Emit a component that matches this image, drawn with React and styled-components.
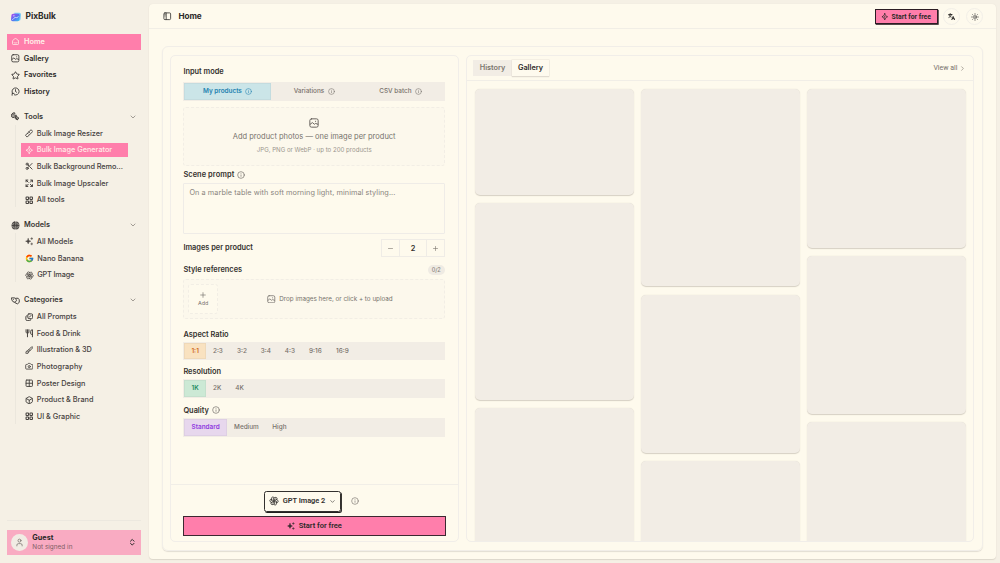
import styled, { createGlobalStyle } from 'styled-components';
import {
  Star, Scissors, Grid2x2, Camera, Box, ChevronDown, ChevronRight, ChevronsUpDown,
  Info, Minus, Plus, Sun, User, Utensils, Brush,
} from 'lucide-react';
import { FcGoogle } from 'react-icons/fc';
import { TbSmartHome, TbBrandOpenai } from 'react-icons/tb';

const GlobalStyle = createGlobalStyle`
  * {
    box-sizing: border-box;
  }
  body {
    margin: 0;
    background: #f5f0e5;
    color: #2b2928;
    font-family: Inter, 'Open Sans', sans-serif;
    font-size: 7.4px;
    overflow: hidden;
  }
  svg {
    flex: none;
    display: block;
  }
`;

const Page = styled.div`
  display: flex;
  height: 563px;
  width: 1000px;
  overflow: hidden;
`;

const T = styled.span`
  white-space: nowrap;
  line-height: 1.3;
  letter-spacing: ${(p) => p.$ls || 0}px;
`;

/* ---------- sidebar ---------- */

const Sidebar = styled.aside`
  width: 149px;
  padding: 8px 8px 8.5px 7px;
  display: flex;
  flex-direction: column;
`;

const Brand = styled.div`
  height: 17px;
  display: flex;
  align-items: center;
  gap: 4.8px;
  padding-left: 3.7px;
  margin-bottom: 8.5px;
  font-size: 8.4px;
  font-weight: 700;
`;

const NavItem = styled.div`
  height: 16.68px;
  display: flex;
  align-items: center;
  gap: 3.7px;
  padding-left: 4.4px;
  font-size: 7.3px;
  font-weight: 600;
  width: 134px;
  background: ${(p) => (p.$active ? '#ff7eab' : 'transparent')};
  color: ${(p) => (p.$active ? '#fff3ea' : 'inherit')};
`;

const Section = styled.section`
  margin-top: 7px;
  &:first-of-type {
    margin-top: 8.2px;
  }
`;

const SectionHead = styled(NavItem)`
  color: #393633;
  > :last-child {
    margin-left: auto;
    margin-right: 4.5px;
    color: #77716b;
  }
`;

const SubList = styled.div`
  margin-left: 8px;
  padding-left: 4.7px;
  padding-top: 1.4px;
  border-left: 1px solid #ebe7dd;
`;

const SubItem = styled.div`
  height: 13.9px;
  margin-bottom: 2.78px;
  width: 107.5px;
  display: flex;
  align-items: center;
  gap: 3.6px;
  padding-left: 4px;
  font-size: 7.3px;
  font-weight: 500;
  background: ${(p) => (p.$active ? '#ff7eab' : 'transparent')};
  color: ${(p) => (p.$active ? '#ffe9e6' : '#45413e')};
`;

const UserArea = styled.div`
  margin-top: auto;
  border-top: 1px solid #ece8df;
  padding-top: 8.5px;
`;

const UserCard = styled.div`
  width: 134px;
  height: 25px;
  background: #f9abc2;
  display: flex;
  align-items: center;
  gap: 4px;
  padding: 0 5px 0 4.3px;
  > :last-child {
    margin-left: auto;
  }
`;

const Avatar = styled.div`
  width: 17px;
  height: 17px;
  border-radius: 50%;
  background: #f1ece4;
  color: #77716c;
  display: grid;
  place-items: center;
`;

const UserName = styled.div`
  display: flex;
  flex-direction: column;
  padding-top: 1px;
  font-size: 7.3px;
  font-weight: 700;
  small {
    font-size: 6.4px;
    font-weight: 400;
    color: #805e66;
    letter-spacing: 0.02px;
    line-height: 10px;
  }
`;

/* ---------- main frame ---------- */

const Main = styled.main`
  width: 847px;
  height: 555px;
  margin-top: 4px;
  background: #fefaed;
  border-radius: 4px;
  box-shadow: 0 0 1px #e2ddd2, 0 1px 1px #dcd6c9;
`;

const TopBar = styled.header`
  height: 25px;
  border-bottom: 1px solid #f1eee6;
  display: flex;
  align-items: center;
  padding: 1px 13px 0 14px;
  font-size: 8.2px;
  font-weight: 700;
`;

const PageTitle = styled(T)`
  margin-left: 7px;
`;

const Cta = styled.div`
  margin-left: auto;
  margin-right: 5.5px;
  width: 63px;
  height: 14.5px;
  background: #ff7eab;
  border: 1px solid #2c1c24;
  box-shadow: 0.7px 0.8px 0 #2c1c24;
  display: flex;
  align-items: center;
  justify-content: center;
  gap: 3px;
  padding-top: 1px;
  font-size: 6.8px;
  font-family: Roboto, sans-serif;
`;

const RoundButton = styled.div`
  width: 17px;
  height: 17px;
  margin-left: ${(p) => p.$gap || 0}px;
  border-radius: 50%;
  border: 1px solid #f2efe8;
  display: grid;
  place-items: center;
`;

const Panel = styled.div`
  margin: 17px 13px 0;
  height: 504.5px;
  border: 1px solid #f1eee8;
  border-radius: 6px;
  box-shadow: 0 1px 1px #e2ddd2;
  padding: 8px 8px 0 7px;
  display: flex;
  gap: 7px;
`;

const Card = styled.section`
  width: ${(p) => p.$w}px;
  height: 487px;
  border: 1px solid #f1eee9;
  border-radius: 5px;
  display: flex;
  flex-direction: column;
  overflow: hidden;
`;

/* ---------- form ---------- */

const Form = styled.div`
  padding: 10px 13px 0 12.4px;
  height: 428px;
`;

const Label = styled.div`
  display: flex;
  align-items: center;
  justify-content: ${(p) => (p.$spread ? 'space-between' : 'flex-start')};
  gap: 3px;
  height: 12px;
  margin-top: ${(p) => p.$mt || 0}px;
  font-size: 7.4px;
  font-weight: 600;
  color: #35322f;
  > svg {
    color: #69645f;
  }
`;

const Segments = styled.div`
  height: 18.5px;
  margin-top: ${(p) => p.$mt}px;
  background: #f2ede5;
  padding: 1px;
  display: flex;
`;

const tones = {
  blue: ['#cbe5e8', '#2583b0'],
  orange: ['#f9e2c0', '#cf6a1e'],
  green: ['#cce9d5', '#238a60'],
  purple: ['#e7d7ed', '#8f3be0'],
};

const Segment = styled.div`
  ${(p) => (p.$w ? `width: ${p.$w}px;` : 'flex: 1;')}
  display: flex;
  align-items: center;
  justify-content: center;
  gap: 3.5px;
  font-size: 6.4px;
  font-weight: ${(p) => (p.$tone ? 600 : 500)};
  color: ${(p) => (p.$tone ? tones[p.$tone][1] : '#77716b')};
  background: ${(p) => (p.$tone ? tones[p.$tone][0] : 'transparent')};
  box-shadow: ${(p) => (p.$tone ? 'inset 0 0 0 0.7px rgba(90, 90, 90, 0.08)' : 'none')};
`;

const Dashed = styled.div`
  border: 1px dashed #f2eee5;
  border-radius: 3px;
  background: #fcf8ec;
  color: #77736d;
`;

const DropZone = styled(Dashed)`
  margin-top: 6.5px;
  height: 58.5px;
  display: flex;
  flex-direction: column;
  align-items: center;
  padding-top: 10px;
  font-size: 7.5px;
  svg {
    color: #5e5954;
    margin-bottom: 3.5px;
  }
  small {
    font-size: 6.1px;
    line-height: 10px;
    margin-top: 3.4px;
    color: #9a958d;
  }
`;

const TextArea = styled.div`
  margin-top: 1.6px;
  height: 51px;
  border: 1px solid #efece7;
  border-radius: 1px;
  padding: 4px 5px;
  font-size: 7.3px;
  color: #8a857e;
`;

const Stepper = styled.div`
  width: 64px;
  height: 18px;
  border: 1px solid #efece6;
  display: grid;
  grid-template-columns: 17px 1fr 17px;
  > * {
    display: grid;
    place-items: center;
  }
  > :nth-child(2) {
    border: solid #efece6;
    border-width: 0 1px;
  }
  svg {
    color: #77716b;
  }
`;

const Count = styled.div`
  width: 17.5px;
  height: 9.7px;
  border-radius: 5px;
  background: #efebe3;
  color: #8a857e;
  font-size: 5.6px;
  font-weight: 500;
  display: grid;
  place-items: center;
`;

const RefZone = styled(Dashed)`
  margin-top: 3px;
  height: 40px;
  padding: 4px;
  display: flex;
`;

const AddBox = styled(Dashed)`
  width: 29.5px;
  height: 30px;
  display: flex;
  flex-direction: column;
  align-items: center;
  padding-top: 6px;
  gap: 1px;
  font-size: 5.4px;
  background: #fefaed;
`;

const RefHint = styled.div`
  flex: 1;
  display: flex;
  align-items: center;
  justify-content: center;
  gap: 3.5px;
  padding-left: 2px;
  font-size: 6.3px;
`;

const Footer = styled.div`
  flex: 1;
  border-top: 1px solid #f1eee7;
  padding: 6px 12.5px 0 12px;
`;

const ModelRow = styled.div`
  display: flex;
  align-items: center;
  padding-left: 81px;
  gap: 9.5px;
  color: #77716b;
`;

const ModelButton = styled.div`
  width: 77px;
  height: 20.5px;
  border: 1px solid #33302e;
  border-radius: 2.5px;
  box-shadow: 0.9px 1px 0 #22201f;
  display: flex;
  align-items: center;
  justify-content: center;
  gap: 3.5px;
  font-size: 7.4px;
  font-weight: 600;
  font-family: Roboto, sans-serif;
  color: #33302e;
`;

const Submit = styled.div`
  height: 19.5px;
  margin-top: 4.5px;
  background: #ff7eab;
  border: 1.4px solid #3d2831;
  display: flex;
  align-items: center;
  justify-content: center;
  gap: 4px;
  font-size: 7.5px;
  font-weight: 600;
  font-family: Roboto, sans-serif;
`;

/* ---------- gallery ---------- */

const GalleryBar = styled.div`
  height: 25px;
  flex: none;
  border-bottom: 1px solid #f1eee7;
  display: flex;
  align-items: center;
  padding: 0 7px 0 6px;
`;

const Tabs = styled.div`
  height: 16px;
  display: flex;
  background: #f2ede5;
`;

const Tab = styled.div`
  width: ${(p) => p.$w}px;
  display: grid;
  place-items: center;
  font-size: 7.3px;
  font-weight: 600;
  color: ${(p) => (p.$active ? '#2f2c2a' : '#7b766f')};
  background: ${(p) => (p.$active ? '#fefaee' : 'transparent')};
  box-shadow: ${(p) => (p.$active ? '0 0 0 0.5px #e9e4da, 0 1px 1px #d9d3c8' : 'none')};
`;

const ViewAll = styled.div`
  margin-left: auto;
  display: flex;
  align-items: center;
  gap: 1.5px;
  padding-top: 1px;
  font-size: 7px;
  font-family: Roboto, sans-serif;
  color: #77716b;
`;

const Columns = styled.div`
  display: grid;
  grid-template-columns: repeat(3, 158.8px);
  column-gap: 7.2px;
  padding: 8.3px 8px 0;
`;

const Column = styled.div`
  display: flex;
  flex-direction: column;
  gap: 8.2px;
`;

const Tile = styled.div`
  height: ${(p) => p.$h}px;
  flex: none;
  background: #f2ede5;
  border-radius: 5px;
  box-shadow: 0 0.8px 1px #d6d0c4;
`;

/* ---------- icons ---------- */

const Icon = ({ s = 9, w = 2, children }) => (
  <svg width={s} height={s} viewBox="0 0 24 24" fill="none" stroke="currentColor" strokeWidth={w} strokeLinecap="round" strokeLinejoin="round">
    {children}
  </svg>
);

const Logo = () => (
  <svg width="10" height="10" viewBox="0 0 24 24">
    <defs>
      <linearGradient id="logo" x1="0" y1="0" x2="1" y2="1">
        <stop offset="0" stopColor="#b64cf0" />
        <stop offset="0.5" stopColor="#5b6cf3" />
        <stop offset="1" stopColor="#35c8ef" />
      </linearGradient>
    </defs>
    <path d="M8 2h12a4 4 0 0 1 4 4l-1 11a4 4 0 0 1-4 4H8z" fill="#79c9f5" />
    <path d="M5 4h12a4 4 0 0 1 4 4l-1 10a4 4 0 0 1-4 4H4a4 4 0 0 1-4-4L1 8a4 4 0 0 1 4-4z" fill="url(#logo)" />
    <path d="M3 18c4 0 4-5 7-5s3 2 8-2" stroke="#d9f4ff" strokeWidth="2" fill="none" />
    <circle cx="7" cy="9" r="1.5" fill="#fff" />
  </svg>
);

const PanelIcon = () => (
  <Icon s={8.5} w={2.2}>
    <rect x="2.5" y="2.5" width="19" height="19" rx="3" />
    <path d="M9 3v18M5.5 7h.5M5.5 11h.5" />
  </Icon>
);

const PictureIcon = ({ s }) => (
  <Icon s={s} w={2.2}>
    <rect x="2" y="2" width="20" height="20" rx="4" />
    <path d="M3 15l5-4 5 4 3-2 5 2" />
    <path d="M15.5 8h.5" />
  </Icon>
);

const HistoryIcon = () => (
  <Icon w={2.2}>
    <path d="M3 22v-5h5" />
    <path d="M4 17a9.5 9.5 0 1 1 5 4" />
    <path d="M12 7v5l3 2" />
  </Icon>
);

const ToolsIcon = () => (
  <Icon w={2.2}>
    <path d="M3 5a5 5 0 0 1 8-2l-3 3 2 3 4-1a5 5 0 0 1-5 6 5 5 0 0 1-6-9z" fill="currentColor" fillOpacity="0.45" />
    <path d="M12 14l5 6M15 12l6 4-4 5-5-3z" fill="currentColor" fillOpacity="0.45" />
  </Icon>
);

const RulerIcon = () => (
  <Icon s={8.5} w={2.6}>
    <path d="M2 17L17 2l5 5L7 22z" />
    <path d="M7 12l2 2M11 8l2 2" />
  </Icon>
);

const SparkIcon = ({ s }) => (
  <Icon s={s} w={2.6}>
    <path d="M12 2c1 5 4 8 9 10-5 2-8 5-9 10-1-5-4-8-9-10 5-2 8-5 9-10z" />
    <path d="M12 10v4" />
  </Icon>
);

const StarsIcon = ({ s }) => (
  <Icon s={s} w={1.8}>
    <path d="M9 5c.7 4 2.5 6 7 7-4.5 1-6.3 3-7 7-.7-4-2.5-6-7-7 4.5-1 6.3-3 7-7z" fill="currentColor" />
    <path d="M19 2v5M16.5 4.500h5M19 17v5M16.5 19.5h5" />
  </Icon>
);

const UpscaleIcon = () => (
  <Icon s={8.5} w={2.8}>
    <path d="M3 8V3h5M3 3l6 6M16 3h5v5M21 3l-6 6M3 16v5h5M3 21l6-6M21 16v5h-5M21 21l-6-6" />
  </Icon>
);

const BlocksIcon = () => (
  <Icon s={8.5} w={3}>
    <rect x="3" y="3" width="7" height="7" rx="1.5" />
    <rect x="14" y="3" width="7" height="7" rx="1.5" />
    <rect x="3" y="14" width="7" height="7" rx="1.5" />
    <rect x="14" y="14" width="7" height="7" rx="1.5" />
  </Icon>
);

const ModelIcon = () => (
  <Icon w={2}>
    <rect x="3" y="3" width="18" height="18" rx="6" fill="currentColor" fillOpacity="0.35" />
    <rect x="8" y="8" width="8" height="8" rx="2" />
    <path d="M8 3v18M16 3v18M3 12h18" />
  </Icon>
);

const TagsIcon = () => (
  <Icon w={2.4}>
    <path d="M2 5h8l5 6-4 6-6-2-3-5z" />
    <path d="M13 6h6l3 4v7l-5 4-6-3" />
    <path d="M6 9h.5" />
  </Icon>
);

const PromptsIcon = () => (
  <Icon s={8.5} w={2.8}>
    <rect x="8" y="2.5" width="13.5" height="13.5" rx="3" />
    <path d="M5 8c-2 0-2.5 1-2.5 3v7c0 2 1.5 3.5 3.5 3.5h7c2 0 3-.5 3-2.5" />
    <path d="M12 12l5-5" />
  </Icon>
);

const TranslateIcon = () => (
  <Icon s={7.5} w={3}>
    <path d="M2 5h11M7 2v3M11 5c-1 4-4 7-8 9M4 8c2 3 4 4 6 5" />
    <path d="M12 22l4.5-11L21 22M14 18h5" />
  </Icon>
);

const Hint = ({ s = 7 }) => <Info size={s} strokeWidth={1.9} />;

/* ---------- data ---------- */

const mainNav = [
  { icon: <TbSmartHome size={9} />, text: 'Home', active: true },
  { icon: <PictureIcon s={8.6} />, text: 'Gallery' },
  { icon: <Star size={9} strokeWidth={2.3} />, text: 'Favorites' },
  { icon: <HistoryIcon />, text: 'History' },
];

const sections = [
  {
    title: 'Tools',
    icon: <ToolsIcon />,
    items: [
      { icon: <RulerIcon />, text: 'Bulk Image Resizer' },
      { icon: <SparkIcon s={8.5} />, text: 'Bulk Image Generator', active: true },
      { icon: <Scissors size={8.5} strokeWidth={2.6} />, text: 'Bulk Background Remo...', ls: -0.06 },
      { icon: <UpscaleIcon />, text: 'Bulk Image Upscaler' },
      { icon: <BlocksIcon />, text: 'All tools' },
    ],
  },
  {
    title: 'Models',
    icon: <ModelIcon />,
    items: [
      { icon: <StarsIcon s={8.5} />, text: 'All Models' },
      { icon: <FcGoogle size={9} />, text: 'Nano Banana' },
      { icon: <TbBrandOpenai size={9} />, text: 'GPT Image', ls: -0.15 },
    ],
  },
  {
    title: 'Categories',
    icon: <TagsIcon />,
    items: [
      { icon: <PromptsIcon />, text: 'All Prompts' },
      { icon: <Utensils size={8.5} strokeWidth={2.8} />, text: 'Food & Drink', ls: -0.06 },
      { icon: <Brush size={8.5} strokeWidth={2.6} />, text: 'Illustration & 3D' },
      { icon: <Camera size={8.5} strokeWidth={2.4} />, text: 'Photography', ls: 0.1 },
      { icon: <Grid2x2 size={8.5} strokeWidth={2.6} />, text: 'Poster Design' },
      { icon: <Box size={8.5} strokeWidth={2.6} />, text: 'Product & Brand' },
      { icon: <BlocksIcon />, text: 'UI & Graphic' },
    ],
  },
];

const ratios = [['1:1', 21.5], ['2:3', 24], ['3:2', 24], ['3:4', 24], ['4:3', 24], ['9:16', 27], ['16:9', 27]];
const resolutions = [['1K', 21.5], ['2K', 22.5], ['4K', 22.5]];
const qualities = [['Standard', 42.5], ['Medium', 39], ['High', 27]];
const tiles = [[105.5, 197.2, 198], [197.2, 158.5, 198], [158.3, 158, 159]];

function Picker({ options, tone, mt }) {
  return (
    <Segments $mt={mt}>
      {options.map(([text, w], i) => (
        <Segment key={text} $w={w} $tone={i === 0 ? tone : undefined}>
          <T>{text}</T>
        </Segment>
      ))}
    </Segments>
  );
}

export default function App() {
  return (
    <Page>
      <GlobalStyle />
      <Sidebar>
        <Brand><Logo /><T>PixBulk</T></Brand>
        {mainNav.map((n) => (
          <NavItem key={n.text} $active={n.active}>{n.icon}<T>{n.text}</T></NavItem>
        ))}
        {sections.map((s) => (
          <Section key={s.title}>
            <SectionHead>{s.icon}<T>{s.title}</T><ChevronDown size={8} /></SectionHead>
            <SubList>
              {s.items.map((item) => (
                <SubItem key={item.text} $active={item.active}>
                  {item.icon}
                  <T $ls={item.ls}>{item.text}</T>
                </SubItem>
              ))}
            </SubList>
          </Section>
        ))}
        <UserArea>
          <UserCard>
            <Avatar><User size={9} /></Avatar>
            <UserName><T>Guest</T><small>Not signed in</small></UserName>
            <ChevronsUpDown size={8.5} strokeWidth={2.8} />
          </UserCard>
        </UserArea>
      </Sidebar>

      <Main>
        <TopBar>
          <PanelIcon />
          <PageTitle $ls={-0.1}>Home</PageTitle>
          <Cta><SparkIcon s={7.5} /><T>Start for free</T></Cta>
          <RoundButton><TranslateIcon /></RoundButton>
          <RoundButton $gap={6}><Sun size={8} /></RoundButton>
        </TopBar>

        <Panel>
          <Card $w={289}>
            <Form>
              <Label><T>Input mode</T></Label>
              <Segments $mt={4}>
                <Segment $tone="blue"><T>My products</T><Hint /></Segment>
                <Segment><T>Variations</T><Hint /></Segment>
                <Segment><T>CSV batch</T><Hint /></Segment>
              </Segments>
              <DropZone>
                <PictureIcon s={10} />
                <T>Add product photos — one image per product</T>
                <small>JPG, PNG or WebP · up to 200 products</small>
              </DropZone>
              <Label $mt={3.8}><T $ls={0.08}>Scene prompt</T><Hint s={8} /></Label>
              <TextArea><T $ls={0.07}>On a marble table with soft morning light, minimal styling...</T></TextArea>
              <Label $mt={8.2} $spread>
                <T>Images per product</T>
                <Stepper>
                  <span><Minus size={7} /></span>
                  <span>2</span>
                  <span><Plus size={7} /></span>
                </Stepper>
              </Label>
              <Label $mt={10} $spread><T>Style references</T><Count>0/2</Count></Label>
              <RefZone>
                <AddBox><Plus size={8} /><T>Add</T></AddBox>
                <RefHint><PictureIcon s={8.5} /><T>Drop images here, or click + to upload</T></RefHint>
              </RefZone>
              <Label $mt={9.3}><T>Aspect Ratio</T></Label>
              <Picker options={ratios} tone="orange" mt={1.5} />
              <Label $mt={5.6}><T>Resolution</T></Label>
              <Picker options={resolutions} tone="green" mt={1.3} />
              <Label $mt={6.7}><T>Quality</T><Hint s={8} /></Label>
              <Picker options={qualities} tone="purple" mt={1.7} />
            </Form>
            <Footer>
              <ModelRow>
                <ModelButton><TbBrandOpenai size={10} /><T $ls={-0.04}>GPT Image 2</T><ChevronDown size={7} /></ModelButton>
                <Hint s={8} />
              </ModelRow>
              <Submit><StarsIcon s={8} /><T>Start for free</T></Submit>
            </Footer>
          </Card>

          <Card $w={508}>
            <GalleryBar>
              <Tabs>
                <Tab $w={39}><T>History</T></Tab>
                <Tab $w={37} $active><T>Gallery</T></Tab>
              </Tabs>
              <ViewAll><T>View all</T><ChevronRight size={7} /></ViewAll>
            </GalleryBar>
            <Columns>
              {tiles.map((col, i) => (
                <Column key={i}>
                  {col.map((h, j) => <Tile key={j} $h={h} />)}
                </Column>
              ))}
            </Columns>
          </Card>
        </Panel>
      </Main>
    </Page>
  );
}
